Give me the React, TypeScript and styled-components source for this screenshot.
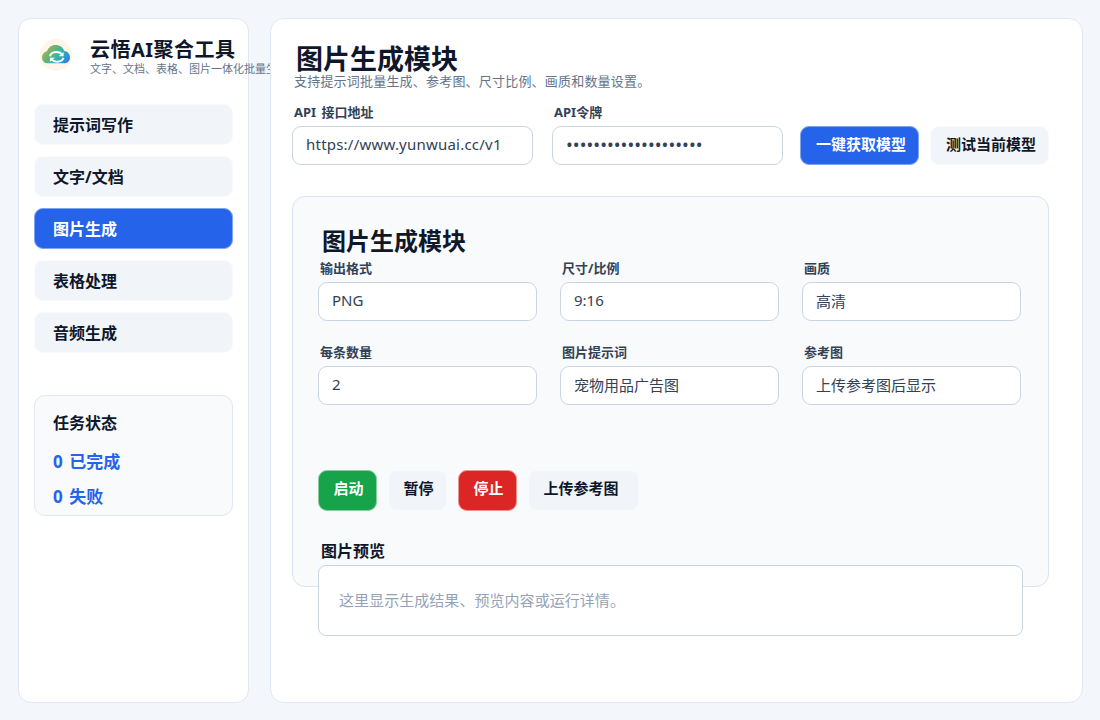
import React from 'react';
import styled, { createGlobalStyle } from 'styled-components';

const GlobalStyle = createGlobalStyle`
  * { box-sizing: border-box; }
  body {
    margin: 0;
    background: #f3f6fb;
    color: #0f172a;
    font-family: 'Noto Sans', 'Noto Sans CJK SC', sans-serif;
  }
  h1, h2, h3, p { margin: 0; }
  button, input { font-family: inherit; }
`;

const Page = styled.div`
  display: flex;
  gap: 21px;
  width: 1100px;
  height: 720px;
  padding: 18px 17px 17px 18px;
  overflow: hidden;
`;

const Sidebar = styled.aside`
  width: 231px;
  height: 685px;
  flex: none;
  padding: 19px 15px 0;
  background: #fff;
  border: 1px solid #dfe8f2;
  border-radius: 13px;
`;

const Brand = styled.header`
  display: flex;
  align-items: flex-start;
  height: 66px;
  padding-left: 6px;
`;

const Logo = styled.svg`
  flex: none;
  width: 32px;
  height: 32px;
  margin: 1px 18px 0 0;
`;

const BrandText = styled.div`
  width: 145px;
  white-space: nowrap;
`;

const BrandName = styled.h1`
  font-size: 20px;
  line-height: 24px;
  height: 24px;
  letter-spacing: 0.5px;
`;

const BrandNote = styled.p`
  font-size: 11px;
  line-height: 14px;
  color: #64748b;
`;

const Nav = styled.nav`
  display: flex;
  flex-direction: column;
  gap: 11px;
`;

const NavItem = styled.button<{ $active?: boolean }>`
  height: 41px;
  padding: 0 18px 0;
  text-align: left;
  font-size: 16px;
  font-weight: 700;
  line-height: 38px;
  color: ${p => (p.$active ? '#fff' : '#0f172a')};
  background: ${p => (p.$active ? '#2563eb' : '#f1f5f9')};
  border: 1px solid ${p => (p.$active ? '#7da3f3' : '#f8fafc')};
  border-radius: 9px;
`;

const Status = styled.section`
  height: 121px;
  margin-top: 42px;
  padding: 15px 18px 0;
  background: #f8fafc;
  border: 1px solid #e2e8f0;
  border-radius: 11px;
`;

const StatusTitle = styled.h3`
  font-size: 16px;
  line-height: 24px;
  margin-bottom: 9px;
`;

const StatusLine = styled.p`
  font-size: 17px;
  font-weight: 700;
  line-height: 35px;
  word-spacing: 2px;
  color: #2563eb;
`;

const Main = styled.main`
  position: relative;
  width: 813px;
  height: 685px;
  flex: none;
  padding: 24px 33px 0 21px;
  background: #fff;
  border: 1px solid #dfe8f2;
  border-radius: 14px;
`;

const Title = styled.h2`
  padding-left: 4px;
  font-size: 27px;
  line-height: 32px;
  height: 30px;
`;

const Description = styled.p`
  padding-left: 2px;
  font-size: 13px;
  line-height: 16px;
  height: 16px;
  letter-spacing: 0.2px;
  color: #64748b;
`;

const Connection = styled.div`
  display: flex;
  align-items: flex-end;
  margin-top: 15px;
  height: 61px;
`;

const FieldBox = styled.label<{ $width: number; $gap?: number }>`
  display: block;
  width: ${p => p.$width}px;
  margin-right: ${p => p.$gap ?? 0}px;
`;

const FieldLabel = styled.span`
  display: block;
  height: 22px;
  padding-left: 2px;
  font-size: 13px;
  font-weight: 700;
  line-height: 17px;
  word-spacing: 2px;
  color: #334155;
`;

const Input = styled.input<{ $url?: boolean }>`
  display: block;
  width: 100%;
  height: 39px;
  padding: 0 13px 3px;
  font-size: 15px;
  letter-spacing: ${p => (p.$url ? '0.22px' : 'normal')};
  color: #334155;
  background: #fff;
  border: 1px solid #cbd5e1;
  border-radius: 9px;
  outline: none;
  &[type='password'] {
    font-size: 18px;
    letter-spacing: 0.06px;
    padding-bottom: 3px;
  }
`;

type Tone = 'primary' | 'plain' | 'success' | 'danger';
const tones: Record<Tone, [string, string, string]> = {
  primary: ['#2563eb', '#7da3f3', '#fff'],
  plain: ['#f1f5f9', '#f8fafc', '#0f172a'],
  success: ['#16a34a', '#86cea0', '#fff'],
  danger: ['#dc2626', '#ed9191', '#fff'],
};

const Button = styled.button<{ $tone: Tone; $width: number; $tall?: boolean }>`
  width: ${p => p.$width}px;
  height: ${p => (p.$tall ? 41 : 39)}px;
  padding: 0 0 ${p => (p.$tall ? 7 : 5)}px ${p => (p.$tall ? 14.5 : 15)}px;
  text-align: left;
  font-size: 15px;
  font-weight: 700;
  white-space: nowrap;
  color: ${p => tones[p.$tone][2]};
  background: ${p => tones[p.$tone][0]};
  border: 1px solid ${p => tones[p.$tone][1]};
  border-radius: 9px;
`;

const ConnectionActions = styled.div`
  display: flex;
  gap: 11px;
`;

const Panel = styled.section`
  width: 757px;
  height: 391px;
  margin-top: 31px;
  padding: 29px 25px 0;
  background: #f8fafc;
  border: 1px solid #dae3f0;
  border-radius: 13px;
`;

const PanelTitle = styled.h2`
  padding-left: 4px;
  font-size: 24px;
  line-height: 30px;
  height: 34px;
`;

const Fields = styled.div`
  display: grid;
  grid-template-columns: repeat(3, 219px);
  gap: 23px;
`;

const Actions = styled.div`
  display: flex;
  gap: 11px;
  margin-top: 65px;
`;

const PreviewTitle = styled.h3`
  margin-top: 28px;
  padding-left: 3px;
  height: 26px;
  font-size: 16px;
  line-height: 24px;
`;

const Preview = styled.div`
  width: 705px;
  height: 71px;
  padding: 0 20px;
  font-size: 15px;
  line-height: 68px;
  letter-spacing: 0.05px;
  color: #94a3b8;
  background: #fff;
  border: 1px solid #cbd5e1;
  border-radius: 8px;
`;

const navItems = ['提示词写作', '文字/文档', '图片生成', '表格处理', '音频生成'];

const imageFields = [
  ['输出格式', 'PNG'],
  ['尺寸/比例', '9:16'],
  ['画质', '高清'],
  ['每条数量', '2'],
  ['图片提示词', '宠物用品广告图'],
  ['参考图', '上传参考图后显示'],
];

function CloudLogo() {
  return (
    <Logo viewBox="0 0 32 32">
      <defs>
        <linearGradient id="cloud" x1="0" y1="0.25" x2="1" y2="0.75">
          <stop offset="0" stopColor="#b0b552" />
          <stop offset="0.32" stopColor="#68b573" />
          <stop offset="0.62" stopColor="#2cb5aa" />
          <stop offset="1" stopColor="#3280ea" />
        </linearGradient>
      </defs>
      <circle cx="16" cy="16" r="16" fill="#fff5e9" />
      <path
        d="M8 24.300C4.500 24.300 2 22 2 18.500C2 15.300 4 12.900 7 12.300C8.200 8.500 11.200 6 15.500 6C19.800 6 23.100 8.300 24.200 12.100C27.900 12.500 30 15.300 30 18.500C30 22 27.500 24.300 24 24.300Z"
        fill="url(#cloud)"
      />
      <g fill="none" stroke="#fff" strokeWidth="2">
        <path d="M10 17.200C10.800 14.200 13.300 13 16.500 13C18.800 13 20.600 13.700 21.800 15.100" />
        <path d="M23.500 18.800C22.600 21.700 20.100 22.700 17 22.700C14.700 22.700 12.900 22 11.700 20.600" />
      </g>
      <path d="M23.600 12.900V17.200H18.500ZM9.900 22.900V18.700H15Z" fill="#fff" />
    </Logo>
  );
}

function Field({ label, value, width, gap, kind }: {
  label: string; value: string; width: number; gap?: number; kind?: 'url' | 'password';
}) {
  return (
    <FieldBox $width={width} $gap={gap}>
      <FieldLabel>{label}</FieldLabel>
      <Input defaultValue={value} $url={kind === 'url'} type={kind === 'password' ? 'password' : 'text'} />
    </FieldBox>
  );
}

export default function App() {
  return (
    <>
      <GlobalStyle />
      <Page>
        <Sidebar>
          <Brand>
            <CloudLogo />
            <BrandText>
              <BrandName>云悟AI聚合工具</BrandName>
              <BrandNote>文字、文档、表格、图片一体化批量生成</BrandNote>
            </BrandText>
          </Brand>
          <Nav>
            {navItems.map(item => (
              <NavItem key={item} $active={item === '图片生成'}>{item}</NavItem>
            ))}
          </Nav>
          <Status>
            <StatusTitle>任务状态</StatusTitle>
            <StatusLine>0 已完成</StatusLine>
            <StatusLine>0 失败</StatusLine>
          </Status>
        </Sidebar>
        <Main>
          <Title>图片生成模块</Title>
          <Description>支持提示词批量生成、参考图、尺寸比例、画质和数量设置。</Description>
          <Connection>
            <Field label="API 接口地址" value="https://www.yunwuai.cc/v1" width={241} gap={19} kind="url" />
            <Field label="API令牌" value="••••••••••••••••••••" width={231} gap={17} kind="password" />
            <ConnectionActions>
              <Button $tone="primary" $width={119}>一键获取模型</Button>
              <Button $tone="plain" $width={119}>测试当前模型</Button>
            </ConnectionActions>
          </Connection>
          <Panel>
            <PanelTitle>图片生成模块</PanelTitle>
            <Fields>
              {imageFields.map(([label, value]) => (
                <Field key={label} label={label} value={value} width={219} />
              ))}
            </Fields>
            <Actions>
              <Button $tone="success" $width={59} $tall>启动</Button>
              <Button $tone="plain" $width={59} $tall>暂停</Button>
              <Button $tone="danger" $width={59} $tall>停止</Button>
              <Button $tone="plain" $width={111} $tall>上传参考图</Button>
            </Actions>
            <PreviewTitle>图片预览</PreviewTitle>
            <Preview>这里显示生成结果、预览内容或运行详情。</Preview>
          </Panel>
        </Main>
      </Page>
    </>
  );
}
